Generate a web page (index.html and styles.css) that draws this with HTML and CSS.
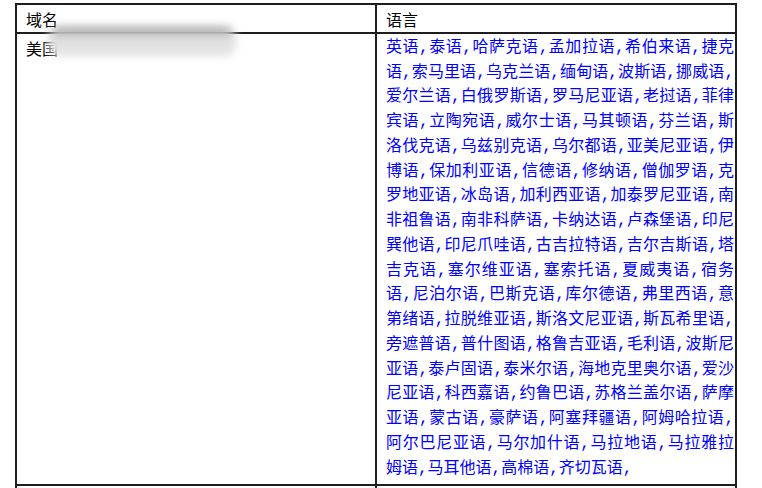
FILE: index.html
```html
<!DOCTYPE html>
<html lang="zh-CN">
<head>
<meta charset="utf-8">
<title>域名 语言</title>
<link rel="stylesheet" href="styles.css">
</head>
<body>
<table class="lang-table">
  <thead>
    <tr><th>域名</th><th>语言</th></tr>
  </thead>
  <tbody>
    <tr>
      <td class="domain">美国<span class="blur"></span></td>
      <td class="langs">英语,泰语,哈萨克语,孟加拉语,希伯来语,捷克语,索马里语,乌克兰语,缅甸语,波斯语,挪威语,爱尔兰语,白俄罗斯语,罗马尼亚语,老挝语,菲律宾语,立陶宛语,威尔士语,马其顿语,芬兰语,斯洛伐克语,乌兹别克语,乌尔都语,亚美尼亚语,伊博语,保加利亚语,信德语,修纳语,僧伽罗语,克罗地亚语,冰岛语,加利西亚语,加泰罗尼亚语,南非祖鲁语,南非科萨语,卡纳达语,卢森堡语,印尼巽他语,印尼爪哇语,古吉拉特语,吉尔吉斯语,塔吉克语,塞尔维亚语,塞索托语,夏威夷语,宿务语,尼泊尔语,巴斯克语,库尔德语,弗里西语,意第绪语,拉脱维亚语,斯洛文尼亚语,斯瓦希里语,旁遮普语,普什图语,格鲁吉亚语,毛利语,波斯尼亚语,泰卢固语,泰米尔语,海地克里奥尔语,爱沙尼亚语,科西嘉语,约鲁巴语,苏格兰盖尔语,萨摩亚语,蒙古语,豪萨语,阿塞拜疆语,阿姆哈拉语,阿尔巴尼亚语,马尔加什语,马拉地语,马拉雅拉姆语,马耳他语,高棉语,齐切瓦语,</td>
    </tr>
    <tr class="next-row">
      <td class="domain"></td>
      <td class="langs"></td>
    </tr>
  </tbody>
</table>
</body>
</html>
```

FILE: styles.css
```css
html, body {
  margin: 0;
  padding: 0;
  background: #ffffff;
}

body {
  font-family: "Noto Sans CJK SC", "Noto Sans", sans-serif;
  color: #000000;
}

.lang-table {
  margin: 3px 0 0 15px;
  width: 722px;
  table-layout: fixed;
  border-collapse: collapse;
  font-size: 16px;
  line-height: 24.75px;
}

.lang-table th,
.lang-table td {
  width: 50%;
  border: 2px solid #1e1e1e;
  padding: 2px 1px 3px 9px;
  text-align: left;
  vertical-align: top;
  font-weight: normal;
}

.lang-table th {
  padding-top: 2px;
  padding-bottom: 0;
}

.next-row td {
  height: 24px;
}

.domain {
  position: relative;
}

.blur {
  position: absolute;
  left: 31px;
  top: -7px;
  width: 188px;
  height: 30px;
  border-radius: 12px;
  background: linear-gradient(#949494 0, #949494 3px, #dcdcdc 8px, #e8e8e8 100%);
  filter: blur(4px);
}

.lang-table td.langs {
  text-align: justify;
  color: #0000ff;
  font-family: "Liberation Mono", "Noto Sans CJK SC", monospace;
}
```
